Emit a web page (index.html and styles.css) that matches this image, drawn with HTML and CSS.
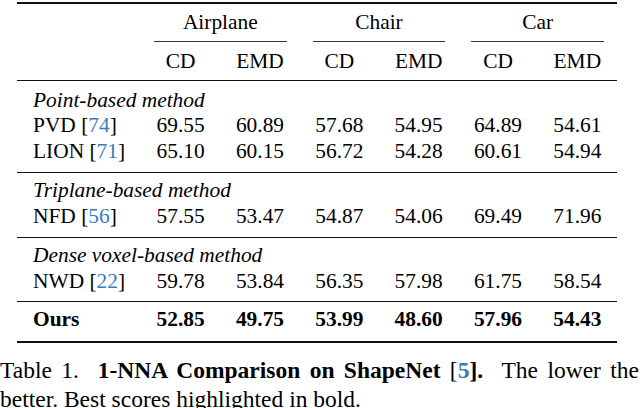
FILE: index.html
```html
<!DOCTYPE html>
<html>
<head>
<meta charset="utf-8">
<link rel="stylesheet" href="styles.css">
</head>
<body>
<div class="table">
  <div class="rule heavy"></div>
  <div class="row head1">
    <div></div>
    <div class="group">Airplane</div>
    <div class="group">Chair</div>
    <div class="group">Car</div>
  </div>
  <div class="row head2">
    <div></div>
    <div class="num">CD</div><div class="num">EMD</div>
    <div class="num">CD</div><div class="num">EMD</div>
    <div class="num">CD</div><div class="num">EMD</div>
  </div>
  <div class="rule"></div>
  <div class="section s1">
    <div class="sect-title">Point-based method</div>
    <div class="row">
      <div class="method">PVD [<span class="cite">74</span>]</div>
      <div class="num">69.55</div><div class="num">60.89</div>
      <div class="num">57.68</div><div class="num">54.95</div>
      <div class="num">64.89</div><div class="num">54.61</div>
    </div>
    <div class="row">
      <div class="method">LION [<span class="cite">71</span>]</div>
      <div class="num">65.10</div><div class="num">60.15</div>
      <div class="num">56.72</div><div class="num">54.28</div>
      <div class="num">60.61</div><div class="num">54.94</div>
    </div>
  </div>
  <div class="rule"></div>
  <div class="section s2">
    <div class="sect-title">Triplane-based method</div>
    <div class="row">
      <div class="method">NFD [<span class="cite">56</span>]</div>
      <div class="num">57.55</div><div class="num">53.47</div>
      <div class="num">54.87</div><div class="num">54.06</div>
      <div class="num">69.49</div><div class="num">71.96</div>
    </div>
  </div>
  <div class="rule"></div>
  <div class="section s3">
    <div class="sect-title">Dense voxel-based method</div>
    <div class="row">
      <div class="method">NWD [<span class="cite">22</span>]</div>
      <div class="num">59.78</div><div class="num">53.84</div>
      <div class="num">56.35</div><div class="num">57.98</div>
      <div class="num">61.75</div><div class="num">58.54</div>
    </div>
  </div>
  <div class="rule"></div>
  <div class="section s4">
    <div class="row ours">
      <div class="method">Ours</div>
      <div class="num">52.85</div><div class="num">49.75</div>
      <div class="num">53.99</div><div class="num">48.60</div>
      <div class="num">57.96</div><div class="num">54.43</div>
    </div>
  </div>
  <div class="rule heavy"></div>
</div>
<p class="caption">Table 1.&nbsp; <b>1-NNA Comparison on ShapeNet <span class="br">[</span><span class="cite">5</span>].</b>&nbsp; The lower the better. Best scores highlighted in bold.</p>
</body>
</html>
```

FILE: styles.css
```css
html, body {
  margin: 0;
  padding: 0;
  background: #fff;
}
body {
  font-family: "Liberation Serif", "Times New Roman", serif;
  color: #000;
  width: 640px;
  height: 408px;
  overflow: hidden;
}
.table {
  width: 600px;
  margin-left: 17px;
  padding-top: 2px;
  font-size: 21.4px;
  line-height: 25.5px;
}
.rule {
  height: 1px;
  background: #111;
}
.rule.heavy {
  height: 2px;
}
.row {
  display: grid;
  grid-template-columns: 124px repeat(6, 1fr);
}
.head1 {
  padding-top: 5.5px;
}
.group {
  grid-column: span 2;
  text-align: center;
  margin: 0 13px;
  padding-bottom: 6px;
  border-bottom: 1px solid #333;
}
.head2 {
  padding-top: 6.5px;
  padding-bottom: 6px;
}
.num {
  text-align: center;
}
.method {
  padding-left: 16px;
  white-space: nowrap;
}
.sect-title {
  font-style: italic;
  padding-left: 16px;
  white-space: nowrap;
}
.s1 { padding: 6.5px 0 8px; }
.s2 { padding: 5px 0 8px; }
.s3 { padding: 5px 0 7px; }
.s4 { padding: 5px 0 8px; }
.ours {
  font-weight: bold;
}
.cite {
  color: #367dbd;
}
.caption {
  margin: 13.5px 0 0 0;
  width: 639px;
  font-size: 23.5px;
  line-height: 28.5px;
  text-align: justify;
}
.br {
  font-weight: normal;
}
```
